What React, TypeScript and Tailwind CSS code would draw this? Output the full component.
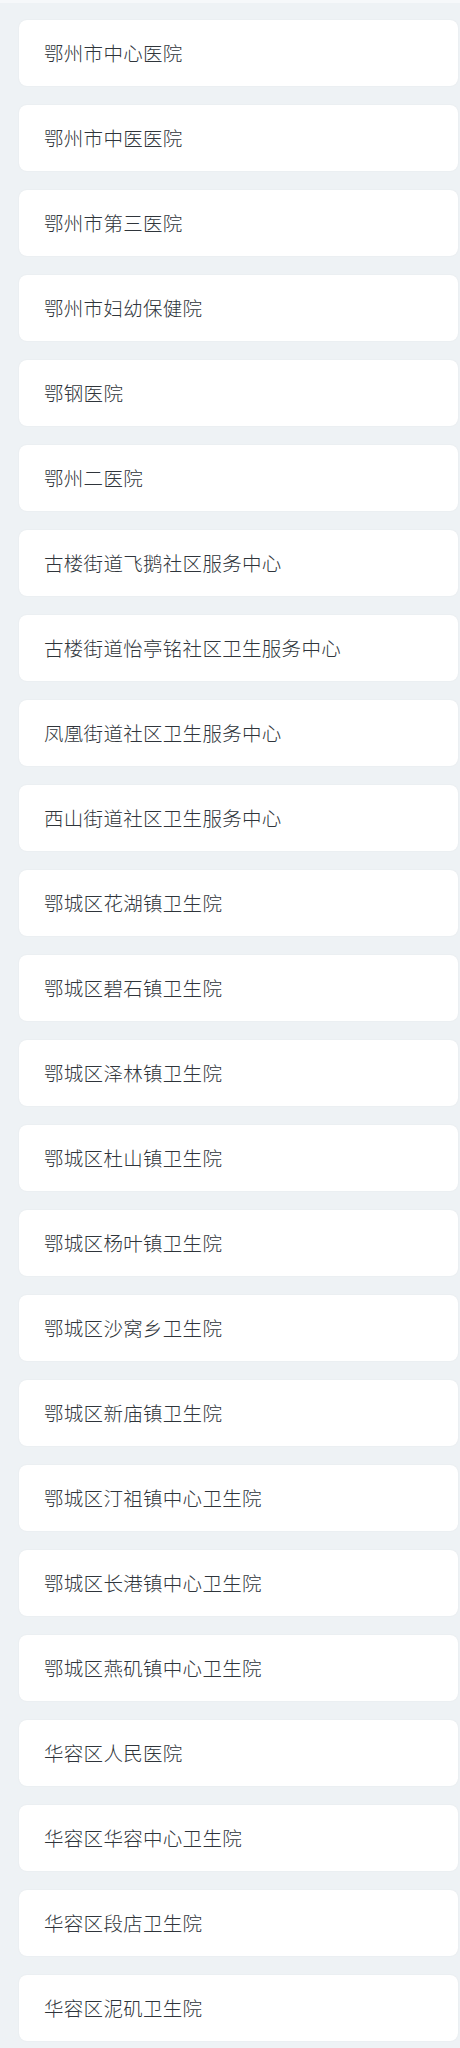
import React from "react";

const items = [
  "鄂州市中心医院",
  "鄂州市中医医院",
  "鄂州市第三医院",
  "鄂州市妇幼保健院",
  "鄂钢医院",
  "鄂州二医院",
  "古楼街道飞鹅社区服务中心",
  "古楼街道怡亭铭社区卫生服务中心",
  "凤凰街道社区卫生服务中心",
  "西山街道社区卫生服务中心",
  "鄂城区花湖镇卫生院",
  "鄂城区碧石镇卫生院",
  "鄂城区泽林镇卫生院",
  "鄂城区杜山镇卫生院",
  "鄂城区杨叶镇卫生院",
  "鄂城区沙窝乡卫生院",
  "鄂城区新庙镇卫生院",
  "鄂城区汀祖镇中心卫生院",
  "鄂城区长港镇中心卫生院",
  "鄂城区燕矶镇中心卫生院",
  "华容区人民医院",
  "华容区华容中心卫生院",
  "华容区段店卫生院",
  "华容区泥矶卫生院",
];

export default function App() {
  return (
    <div
      className="min-h-[2048px] w-[460px] bg-[#eef2f5] overflow-hidden"
      style={{ fontFamily: '"Noto Sans CJK SC", "Noto Sans", sans-serif' }}
    >
      <div className="h-[3px] bg-[#f6f8fa]" />
      <div className="flex flex-col gap-[19px] pl-[19px] pr-[2px] pt-[17px]">
        {items.map((name) => (
          <div
            key={name}
            className="h-[66px] flex items-center rounded-[8px] bg-white pl-[25px] shadow-[0_0_2px_rgba(0,0,0,0.06)]"
          >
            <span className="text-[19.5px] font-light leading-none text-[#2f353b] tracking-[0.3px]">
              {name}
            </span>
          </div>
        ))}
      </div>
    </div>
  );
}
